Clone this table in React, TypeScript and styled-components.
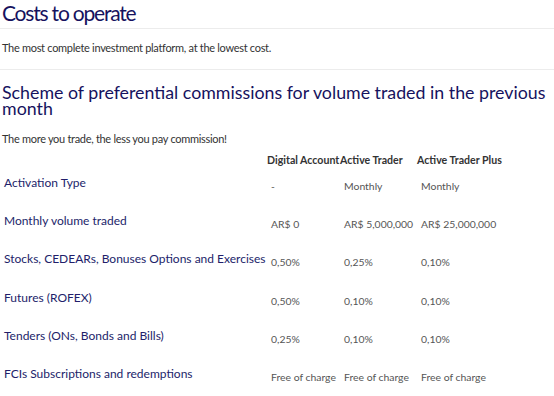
import React from "react";
import styled, { createGlobalStyle } from "styled-components";

const GlobalStyle = createGlobalStyle`
  body {
    margin: 0;
    background: #ffffff;
    font-family: Lato, "Liberation Sans", sans-serif;
  }
`;

interface Row {
  label: string;
  values: string[];
}

const columns = ["Digital Account", "Active Trader", "Active Trader Plus"];

const rows: Row[] = [
  { label: "Activation Type", values: ["-", "Monthly", "Monthly"] },
  {
    label: "Monthly volume traded",
    values: ["AR$ 0", "AR$ 5,000,000", "AR$ 25,000,000"],
  },
  {
    label: "Stocks, CEDEARs, Bonuses Options and Exercises",
    values: ["0,50%", "0,25%", "0,10%"],
  },
  { label: "Futures (ROFEX)", values: ["0,50%", "0,10%", "0,10%"] },
  {
    label: "Tenders (ONs, Bonds and Bills)",
    values: ["0,25%", "0,10%", "0,10%"],
  },
  {
    label: "FCIs Subscriptions and redemptions",
    values: ["Free of charge", "Free of charge", "Free of charge"],
  },
];

const App: React.FC = () => {
  return (
    <Page>
      <GlobalStyle />
      <Title>Costs to operate</Title>
      <Intro>The most complete investment platform, at the lowest cost.</Intro>
      <SubTitle>
        Scheme of preferential commissions for volume traded in the previous
        month
      </SubTitle>
      <Lead>The more you trade, the less you pay commission!</Lead>
      <Table>
        <HeadCell />
        {columns.map((c) => (
          <HeadCell key={c}>{c}</HeadCell>
        ))}
        {rows.map((r) => (
          <React.Fragment key={r.label}>
            <Label>{r.label}</Label>
            {r.values.map((v, i) => (
              <Value key={i}>{v}</Value>
            ))}
          </React.Fragment>
        ))}
      </Table>
    </Page>
  );
};

const Page = styled.div`
  width: 554px;
  height: 396px;
  overflow: hidden;
`;

const Title = styled.h1`
  margin: 0;
  padding: 0 0 3px 2px;
  font-size: 21px;
  font-weight: 400;
  letter-spacing: -1.2px;
  line-height: 25px;
  color: #16125e;
  border-bottom: 1px solid #ececec;
`;

const Intro = styled.p`
  margin: 0;
  padding: 12px 0 14px 2px;
  font-size: 11px;
  letter-spacing: -0.3px;
  line-height: 14px;
  color: #333333;
  border-bottom: 1px solid #ececec;
`;

const SubTitle = styled.h2`
  margin: 0;
  padding: 14px 0 0 2px;
  font-size: 17.8px;
  font-weight: 400;
  line-height: 16px;
  color: #16125e;
`;

const Lead = styled.p`
  margin: 0;
  padding: 16px 0 0 2px;
  font-size: 11px;
  letter-spacing: -0.3px;
  line-height: 14px;
  color: #333333;
`;

const Table = styled.div`
  display: grid;
  grid-template-columns: 267px 73px 77px 1fr;
  grid-template-rows: 18px;
  grid-auto-rows: 38.2px;
  margin-top: 7px;
`;

const HeadCell = styled.div`
  font-size: 10.6px;
  font-weight: 700;
  line-height: 14px;
  color: #333333;
  white-space: nowrap;
`;

const Label = styled.div`
  padding: 4px 0 0 4px;
  font-size: 12px;
  line-height: 16px;
  color: #221e6a;
  white-space: nowrap;
`;

const Value = styled.div`
  padding: 8px 0 0 4px;
  font-size: 10.4px;
  line-height: 14px;
  color: #555555;
  white-space: nowrap;
`;

export default App;
